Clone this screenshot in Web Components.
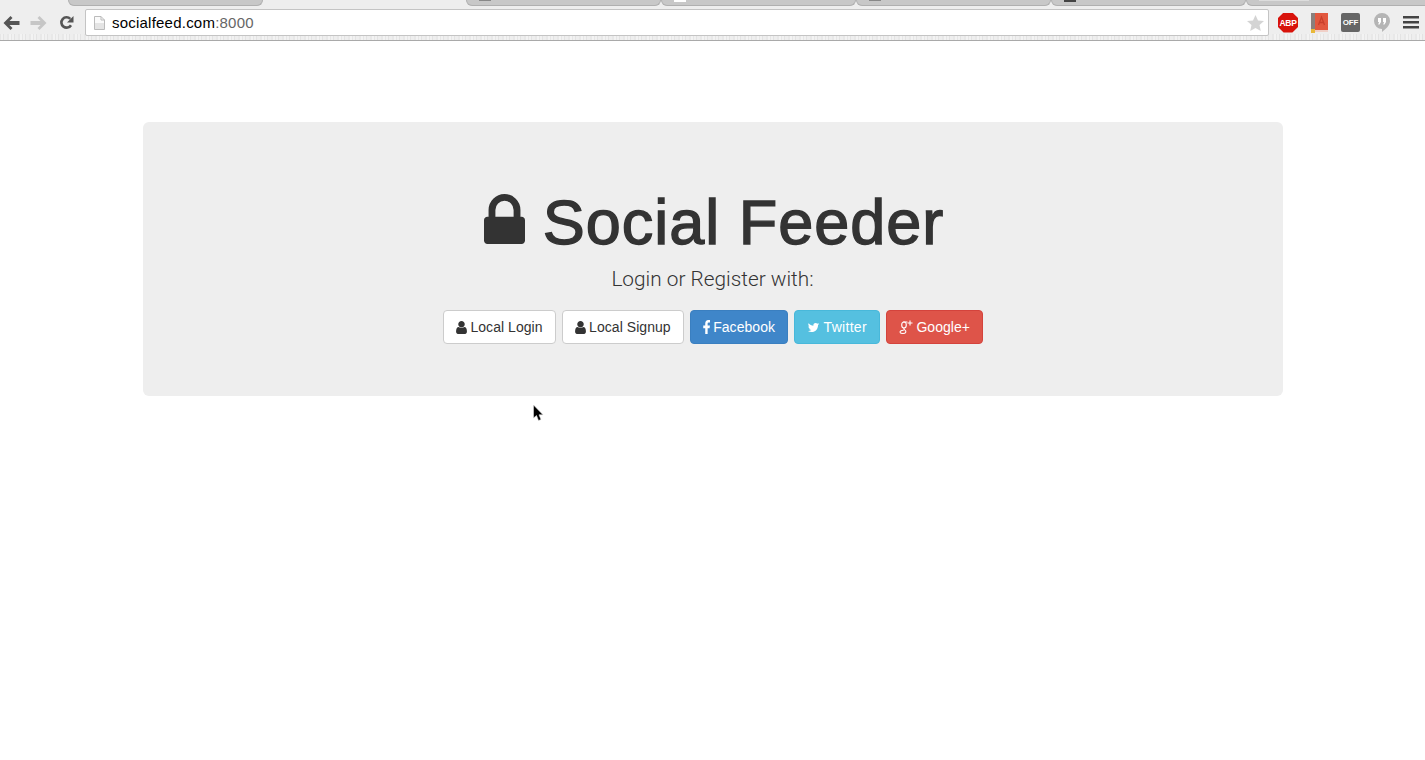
<!DOCTYPE html>
<html>
<head>
<meta charset="utf-8">
<title>Social Feeder</title>
<style>
	html, body {
		margin: 0;
		height: 100%;
		background: #fff;
		overflow: hidden;
		font-family: "Liberation Sans", Arial, sans-serif;
	}
</style>
</head>
<body>
<browser-chrome url-host="socialfeed.com" url-port=":8000"></browser-chrome>
<main-page>
	<hero-panel heading="Social Feeder" lead="Login or Register with:">
		<social-btn kind="default" icon="user">Local Login</social-btn>
		<social-btn kind="default" icon="user">Local Signup</social-btn>
		<social-btn kind="primary" icon="facebook">Facebook</social-btn>
		<social-btn kind="info" icon="twitter">Twitter</social-btn>
		<social-btn kind="danger" icon="google">Google+</social-btn>
	</hero-panel>
	<mouse-cursor></mouse-cursor>
</main-page>

<script>
const ICONS = {
	user: '<svg viewBox="256 128 1280 1536" width="11" height="13" fill="currentColor"><path d="M1536 1399q0 109-62.5 187t-150.5 78h-854q-88 0-150.5-78t-62.5-187q0-85 8.5-160.5t31.5-152 58.5-131 94-89 134.5-34.5q131 128 313 128t313-128q76 0 134.5 34.5t94 89 58.5 131 31.5 152 8.5 160.5zm-256-887q0 159-112.5 271.5t-271.5 112.5-271.5-112.5-112.5-271.5 112.5-271.5 271.5-112.5 271.5 112.5 112.5 271.5z"/></svg>',
	facebook: '<svg viewBox="448 0 896 1536" width="7" height="14" preserveAspectRatio="none" fill="currentColor"><path d="M1343 12v264h-157q-86 0-116 36t-30 108v189h293l-39 296h-254v759h-306v-759h-255v-296h255v-218q0-186 104-288.5t277-102.5q147 0 228 12z"/></svg>',
	twitter: '<svg viewBox="0 128 1792 1536" width="13" height="11" fill="currentColor"><path d="M1684 408q-67 98-162 167 1 14 1 42 0 130-38 259.5t-115.5 248.5-184.5 210.5-258 146-323 54.5q-271 0-496-145 35 4 78 4 225 0 401-138-105-2-188-64.5t-114-159.5q33 5 61 5 43 0 85-11-112-23-185.5-111.5t-73.5-205.5v-4q68 38 146 41-66-44-105-115t-39-154q0-88 44-163 121 149 294.5 238.5t371.5 99.5q-8-38-8-74 0-134 94.5-228.5t228.5-94.5q140 0 236 102 109-21 205-78-37 115-142 178 98-10 196-53z"/></svg>',
	google: '<svg viewBox="0 0 14 15" width="14" height="15" fill="none" stroke="currentColor" stroke-width="1.1"><ellipse cx="5" cy="5" rx="2.300" ry="3"/><path d="M8.400 2H4.200M5.400 8c-1.100.5-.6 1.200.3 1.900 1.300 1 1.500 1.700 1 2.500-.8 1.400-5 1.500-5.600-.2-.4-1.400 1.600-2.100 3.700-2"/><path d="M11 .5v5M8.500 3h5" stroke-width="1.100"/></svg>'
};

class BrowserChrome extends HTMLElement {
	constructor() {
		super();
		this.attachShadow({ mode: 'open' });
	}

	connectedCallback() {
		this.shadowRoot.innerHTML = `
			${this.style()}
			${this.template()}
		`;
	}

	style() {
		return `
			<style>
				:host {
					display: block;
					height: 41px;
					box-sizing: border-box;
					background:
						repeating-linear-gradient(90deg, #e6e6e6 0 1px, #f1f1f1 1px 3px, #e3e3e3 3px 4px, #eeeeee 4px 7px, #e8e8e8 7px 9px, #f3f3f3 9px 11px) bottom / 100% 6px no-repeat,
						#eeeeee;
					border-bottom: 1px solid #a9a9a9;
					color: #555;
				}
				.tabs {
					display: flex;
					height: 6px;
					padding-left: 68px;
					overflow: hidden;
				}
				.tab {
					box-sizing: border-box;
					width: 195px;
					height: 6px;
					flex: none;
					background: #c8c8c8;
					border: 1px solid #b0b0b0;
					border-top: 0;
					border-radius: 0 0 6px 6px;
					display: flex;
					padding-left: 12px;
				}
				.tab.active {
					width: 203px;
					background: transparent;
					border-color: transparent;
				}
				.tab i {
					display: block;
					width: 12px;
					height: 1px;
				}
				.bar {
					display: flex;
					align-items: center;
					height: 27px;
					margin-top: 3px;
				}
				.nav {
					display: flex;
					align-items: center;
					gap: 10px;
					width: 85px;
					flex: none;
					padding-left: 3px;
					box-sizing: border-box;
				}
				.omni {
					box-sizing: border-box;
					width: 1184px;
					height: 27px;
					flex: none;
					display: flex;
					align-items: center;
					background: #fff;
					border: 1px solid #c4c4c4;
					border-radius: 2px;
					padding: 0 4px 0 8px;
					font: 15px "Liberation Sans", Arial, sans-serif;
					letter-spacing: .22px;
					color: #000;
				}
				.omni svg.page { margin-right: 7px; }
				.omni span { color: #666; }
				.omni .star { margin-left: auto; }
				.exts {
					display: flex;
					align-items: center;
					gap: 12px;
					padding-left: 9px;
				}
				.abp {
					width: 20px;
					height: 20px;
					display: flex;
					align-items: center;
					justify-content: center;
					background: #d8130b;
					clip-path: polygon(28% 0, 72% 0, 100% 28%, 100% 72%, 72% 100%, 28% 100%, 0 72%, 0 28%);
					color: #fff;
					font: bold 8.500px "Liberation Sans", Arial, sans-serif;
					letter-spacing: -.3px;
				}
				.off {
					width: 19px;
					height: 19px;
					border-radius: 2px;
					background: #666;
					color: #fff;
					display: flex;
					align-items: center;
					justify-content: center;
					font: bold 8px "Liberation Sans", Arial, sans-serif;
					letter-spacing: -.2px;
					margin-left: 1px;
				}
				.burger { margin-left: 1px; }
			</style>
		`;
	}

	template() {
		return `
			<div class="tabs">
				<div class="tab"></div>
				<div class="tab active"></div>
				<div class="tab"><i style="background:#888"></i></div>
				<div class="tab"><i style="background:#fff;height:2px"></i></div>
				<div class="tab"><i style="background:#888"></i></div>
				<div class="tab"><i style="background:#444;height:2px"></i></div>
				<div class="tab"><i style="background:#ddd;width:50px"></i></div>
			</div>
			<div class="bar">
				<div class="nav">
					<svg width="17" height="14" viewBox="0 0 17 14" fill="#555"><path d="M7.500 0 L9.500 2 L6.500 5 H16.500 V9 H6.500 L9.500 12 L7.500 14 L.5 7 Z"/></svg>
					<svg width="17" height="14" viewBox="0 0 17 14" fill="#c6c6c6"><path d="M9.500 0 L7.500 2 L10.500 5 H.5 V9 H10.500 L7.500 12 L9.500 14 L16.500 7 Z"/></svg>
					<svg width="15" height="15" viewBox="0 0 15 15" fill="none" style="margin-left:2px"><path d="M12 10.200A5.200 5.200 0 1 1 11.300 3.800" stroke="#555" stroke-width="2.600"/><path d="M14.500 1V7.500H8Z" fill="#555"/></svg>
				</div>
				<div class="omni">
					<svg class="page" width="11" height="14" viewBox="0 0 11 14"><path d="M.5.5H7L10.500 4V13.500H.5Z" fill="#fafafa" stroke="#bbb"/><path d="M1 7H10V13H1Z" fill="#e4e4e4"/><path d="M7 .5V4H10.500" fill="none" stroke="#bbb"/></svg>
					${this.getAttribute('url-host')}<span>${this.getAttribute('url-port')}</span>
					<svg class="star" width="17" height="16" viewBox="0 0 17 16" fill="#d4d4d4"><path d="M8.500 0 L11 5.500 L17 6.100 L12.500 10 L13.800 16 L8.500 12.900 L3.200 16 L4.500 10 L0 6.100 L6 5.500 Z"/></svg>
				</div>
				<div class="exts">
					<div class="abp">ABP</div>
					<svg width="17" height="20" viewBox="0 0 17 20" style="margin-left:1px"><path d="M0 0H4V20H0Z" fill="#8a7f7c"/><path d="M4 0H17V17H4Z" fill="#e2583f"/><path d="M4 17H17V19H4Z" fill="#f0d0c8"/><path d="M0 16H4V20H0Z" fill="#e8b93a"/><path d="M7.500 12 L10.500 4 L13.500 12 M8.500 9.500H12.500" fill="none" stroke="#c93f2b" stroke-width="1.300"/></svg>
					<div class="off">OFF</div>
					<svg width="16" height="20" viewBox="0 0 16 20" style="margin-left:2px"><path d="M8 0A8 8 0 0 1 16 8C16 12 12 16 8 19V16A8 8 0 0 1 8 0Z" fill="#b5b5b5"/><path d="M4 5H7V9L5.500 11.500H4.200L5 9H4ZM9 5H12V9L10.500 11.500H9.200L10 9H9Z" fill="#fff"/></svg>
					<svg class="burger" width="16" height="13" viewBox="0 0 16 13" fill="#444"><path d="M0 0H16V2.500H0ZM0 5H16V7.500H0ZM0 10H16V12.500H0Z"/></svg>
				</div>
			</div>
		`;
	}
}

class MainPage extends HTMLElement {
	constructor() {
		super();
		this.attachShadow({ mode: 'open' });
		this.shadowRoot.innerHTML = `
			<style>
				:host {
					display: block;
					position: relative;
					padding-top: 81px;
				}
			</style>
			<slot></slot>
		`;
	}
}

class HeroPanel extends HTMLElement {
	constructor() {
		super();
		this.attachShadow({ mode: 'open' });
	}

	connectedCallback() {
		this.shadowRoot.innerHTML = `
			<style>
				:host {
					display: block;
					box-sizing: border-box;
					width: 1140px;
					height: 274px;
					margin: 0 auto;
					padding-top: 66px;
					background: #eee;
					border-radius: 6px;
					text-align: center;
					color: #333;
				}
				h1 {
					margin: 0;
					padding-left: 3px;
					display: flex;
					align-items: center;
					justify-content: center;
					gap: 18px;
					font: 500 63px/69px "Liberation Sans", Arial, sans-serif;
					letter-spacing: 1px;
					-webkit-text-stroke: 1.4px #333;
				}
				h1 svg { margin-top: -8px; }
				p {
					margin: 7px 0 16px;
					font: 300 20.800px/30px Roboto, "Liberation Sans", Arial, sans-serif;
					color: #333;
				}
				.btns {
					display: flex;
					justify-content: center;
					gap: 6px;
					padding-left: 1px;
				}
			</style>
			<h1>
				<svg width="41" height="50" viewBox="320 128 1152 1408" preserveAspectRatio="none" fill="currentColor"><path d="M640 768h512v-192q0-106-75-181t-181-75-181 75-75 181v192zm832 96v576q0 40-28 68t-68 28h-960q-40 0-68-28t-28-68v-576q0-40 28-68t68-28h32v-192q0-184 132-316t316-132 316 132 132 316v192h32q40 0 68 28t28 68z"/></svg>
				<span>${this.getAttribute('heading')}</span>
			</h1>
			<p>${this.getAttribute('lead')}</p>
			<div class="btns"><slot></slot></div>
		`;
	}
}

class SocialBtn extends HTMLElement {
	constructor() {
		super();
		this.attachShadow({ mode: 'open' });
	}

	connectedCallback() {
		const icon = ICONS[this.getAttribute('icon')] || '';
		this.shadowRoot.innerHTML = `
			<style>
				:host {
					display: inline-flex;
					align-items: center;
					gap: 3.500px;
					box-sizing: border-box;
					height: 34px;
					padding: 0 12px;
					border: 1px solid #ccc;
					border-radius: 4px;
					background: #fff;
					color: #333;
					font: 14px/20px "Liberation Sans", Arial, sans-serif;
					letter-spacing: .05px;
					white-space: nowrap;
				}
				:host([kind="primary"]) {
					background: #3f86c9;
					border-color: #3a7fc0;
					color: #fff;
				}
				:host([kind="info"]) {
					background: #55c0e0;
					border-color: #48b8da;
					color: #fff;
					letter-spacing: .3px;
				}
				:host([kind="danger"]) {
					background: #de5449;
					border-color: #d4433c;
					color: #fff;
				}
				svg { flex: none; }
			</style>
			${icon}<slot></slot>
		`;
	}
}

class MouseCursor extends HTMLElement {
	constructor() {
		super();
		this.attachShadow({ mode: 'open' });
		this.shadowRoot.innerHTML = `
			<style>
				:host {
					position: absolute;
					left: 533px;
					top: 364px;
					width: 12px;
					height: 18px;
				}
				svg { display: block; }
			</style>
			<svg width="12" height="18" viewBox="0 0 12 18"><path d="M.5 0V13L3.500 10.500L5.500 15.500L8 14.500L6 9.800H10Z" fill="#000" stroke="#ddd" stroke-width=".6"/></svg>
		`;
	}
}

customElements.define('browser-chrome', BrowserChrome);
customElements.define('main-page', MainPage);
customElements.define('hero-panel', HeroPanel);
customElements.define('social-btn', SocialBtn);
customElements.define('mouse-cursor', MouseCursor);
</script>
</body>
</html>
